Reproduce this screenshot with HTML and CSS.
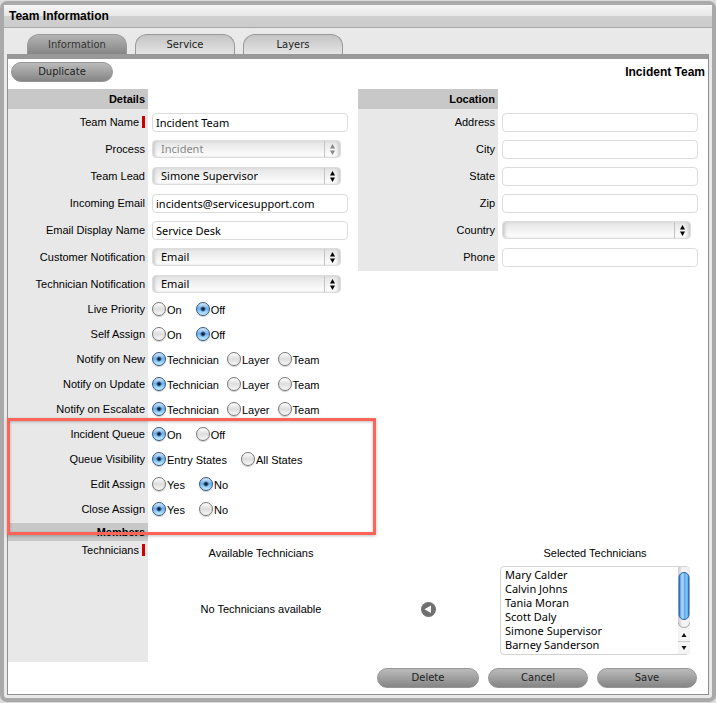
FILE: index.html
```html
<!DOCTYPE html>
<html lang="en">
  <head>
    <meta charset="utf-8" />
    <title>Team Information</title>
    <link rel="stylesheet" href="styles.css" />
  </head>
  <body>
    <svg class="symbols" aria-hidden="true">
      <symbol id="arrows" viewBox="0 0 7 11">
        <path d="M3.5 0 L6 4.5 H1 Z M3.5 11 L6 6.5 H1 Z" fill="currentColor" />
      </symbol>
    </svg>

    <div class="window">
      <h1 class="title">Team Information</h1>

      <div class="tabs" role="tablist">
        <button class="tab active" role="tab" aria-selected="true">Information</button>
        <button class="tab" role="tab">Service</button>
        <button class="tab" role="tab">Layers</button>
      </div>

      <form class="panel">
        <div class="toolbar">
          <button type="button" class="button wide">Duplicate</button>
          <h2 class="team">Incident Team</h2>
        </div>

        <div class="columns">
          <div class="column">
            <h3 class="section">Details</h3>
            <div class="row">
              <label class="label required" for="teamName">Team Name</label>
              <div class="field"><input type="text" id="teamName" value="Incident Team" /></div>
            </div>
            <div class="row">
              <label class="label" for="process">Process</label>
              <div class="field">
                <div class="dropdown disabled">
                  <select id="process" disabled><option>Incident</option></select>
                  <svg class="arrows"><use href="#arrows" /></svg>
                </div>
              </div>
            </div>
            <div class="row">
              <label class="label" for="teamLead">Team Lead</label>
              <div class="field">
                <div class="dropdown">
                  <select id="teamLead"><option>Simone Supervisor</option></select>
                  <svg class="arrows"><use href="#arrows" /></svg>
                </div>
              </div>
            </div>
            <div class="row">
              <label class="label" for="email">Incoming Email</label>
              <div class="field"><input type="text" id="email" value="incidents@servicesupport.com" /></div>
            </div>
            <div class="row">
              <label class="label" for="displayName">Email Display Name</label>
              <div class="field"><input type="text" id="displayName" value="Service Desk" /></div>
            </div>
            <div class="row">
              <label class="label" for="customerNote">Customer Notification</label>
              <div class="field">
                <div class="dropdown">
                  <select id="customerNote"><option>Email</option></select>
                  <svg class="arrows"><use href="#arrows" /></svg>
                </div>
              </div>
            </div>
            <div class="row">
              <label class="label" for="technicianNote">Technician Notification</label>
              <div class="field">
                <div class="dropdown">
                  <select id="technicianNote"><option>Email</option></select>
                  <svg class="arrows"><use href="#arrows" /></svg>
                </div>
              </div>
            </div>

            <div class="row short" role="radiogroup" aria-labelledby="livePriority">
              <span class="label" id="livePriority">Live Priority</span>
              <div class="choices">
                <label><input type="radio" name="live" />On</label>
                <label><input type="radio" name="live" checked />Off</label>
              </div>
            </div>
            <div class="row short" role="radiogroup" aria-labelledby="selfAssign">
              <span class="label" id="selfAssign">Self Assign</span>
              <div class="choices">
                <label><input type="radio" name="self" />On</label>
                <label><input type="radio" name="self" checked />Off</label>
              </div>
            </div>
            <div class="row short" role="radiogroup" aria-labelledby="notifyNew">
              <span class="label" id="notifyNew">Notify on New</span>
              <div class="choices tight">
                <label><input type="radio" name="new" checked />Technician</label>
                <label><input type="radio" name="new" />Layer</label>
                <label><input type="radio" name="new" />Team</label>
              </div>
            </div>
            <div class="row short" role="radiogroup" aria-labelledby="notifyUpdate">
              <span class="label" id="notifyUpdate">Notify on Update</span>
              <div class="choices tight">
                <label><input type="radio" name="update" checked />Technician</label>
                <label><input type="radio" name="update" />Layer</label>
                <label><input type="radio" name="update" />Team</label>
              </div>
            </div>
            <div class="row short" role="radiogroup" aria-labelledby="notifyEscalate">
              <span class="label" id="notifyEscalate">Notify on Escalate</span>
              <div class="choices tight">
                <label><input type="radio" name="escalate" checked />Technician</label>
                <label><input type="radio" name="escalate" />Layer</label>
                <label><input type="radio" name="escalate" />Team</label>
              </div>
            </div>

            <div class="highlight">
              <div class="row short" role="radiogroup" aria-labelledby="queue">
                <span class="label" id="queue">Incident Queue</span>
                <div class="choices">
                  <label><input type="radio" name="queue" checked />On</label>
                  <label><input type="radio" name="queue" />Off</label>
                </div>
              </div>
              <div class="row short" role="radiogroup" aria-labelledby="visibility">
                <span class="label" id="visibility">Queue Visibility</span>
                <div class="choices">
                  <label><input type="radio" name="visibility" checked />Entry States</label>
                  <label><input type="radio" name="visibility" />All States</label>
                </div>
              </div>
              <div class="row short" role="radiogroup" aria-labelledby="editAssign">
                <span class="label" id="editAssign">Edit Assign</span>
                <div class="choices">
                  <label><input type="radio" name="edit" />Yes</label>
                  <label><input type="radio" name="edit" checked />No</label>
                </div>
              </div>
              <div class="row short" role="radiogroup" aria-labelledby="closeAssign">
                <span class="label" id="closeAssign">Close Assign</span>
                <div class="choices">
                  <label><input type="radio" name="close" checked />Yes</label>
                  <label><input type="radio" name="close" />No</label>
                </div>
              </div>
            </div>
          </div>

          <div class="column">
            <h3 class="section">Location</h3>
            <div class="row">
              <label class="label" for="address">Address</label>
              <div class="field"><input type="text" id="address" /></div>
            </div>
            <div class="row">
              <label class="label" for="city">City</label>
              <div class="field"><input type="text" id="city" /></div>
            </div>
            <div class="row">
              <label class="label" for="state">State</label>
              <div class="field"><input type="text" id="state" /></div>
            </div>
            <div class="row">
              <label class="label" for="zip">Zip</label>
              <div class="field"><input type="text" id="zip" /></div>
            </div>
            <div class="row">
              <label class="label" for="country">Country</label>
              <div class="field">
                <div class="dropdown">
                  <select id="country"><option></option></select>
                  <svg class="arrows"><use href="#arrows" /></svg>
                </div>
              </div>
            </div>
            <div class="row">
              <label class="label" for="phone">Phone</label>
              <div class="field"><input type="text" id="phone" /></div>
            </div>
          </div>
        </div>

        <h3 class="section members">Members</h3>
        <div class="row technicians">
          <span class="label required">Technicians</span>
          <div class="transfer">
            <div class="side">
              <span>Available Technicians</span>
              <p class="empty">No Technicians available</p>
            </div>
            <button type="button" class="move" aria-label="Remove technician">
              <svg width="15" height="15" viewBox="0 0 15 15">
                <circle cx="7.5" cy="7.5" r="7.5" fill="#707070" />
                <path d="M10 3.5 V11 L3.5 7.3 Z" fill="#fff" />
              </svg>
            </button>
            <div class="side">
              <label for="selected">Selected Technicians</label>
              <div class="listbox">
                <select id="selected" multiple size="6">
                  <option>Mary Calder</option>
                  <option>Calvin Johns</option>
                  <option>Tania Moran</option>
                  <option>Scott Daly</option>
                  <option>Simone Supervisor</option>
                  <option>Barney Sanderson</option>
                </select>
                <svg class="scrollbar" width="12" height="87" viewBox="0 0 12 87">
                  <defs>
                    <linearGradient id="track">
                      <stop offset="0" stop-color="#ccc" />
                      <stop offset="0.4" stop-color="#f5f5f5" />
                      <stop offset="1" stop-color="#eee" />
                    </linearGradient>
                    <linearGradient id="thumb">
                      <stop offset="0" stop-color="#2468b8" />
                      <stop offset="0.2" stop-color="#8cc0f4" />
                      <stop offset="0.4" stop-color="#b5dafa" />
                      <stop offset="0.55" stop-color="#62aaf0" />
                      <stop offset="0.8" stop-color="#84cdfa" />
                      <stop offset="1" stop-color="#2468b8" />
                    </linearGradient>
                  </defs>
                  <rect width="12" height="87" fill="url(#track)" />
                  <rect x="1" y="5.5" width="10" height="47" rx="5" fill="url(#thumb)" stroke="#2662a8" />
                  <path d="M0 55 Q1 60.5 6 60.5 T12 55 V87 H0 Z" fill="#f4f4f4" />
                  <path d="M0 55 Q1 60.5 6 60.5 Q11 60.5 12 55" fill="none" stroke="#aaa" />
                  <path d="M0 74.5 H12" stroke="#ccc" />
                  <path d="M6 66 L8.5 70 H3.5 Z M6 83 L8.5 79 H3.5 Z" fill="#111" />
                </svg>
              </div>
            </div>
          </div>
        </div>

        <div class="footer">
          <button type="button" class="button wide">Delete</button>
          <button type="button" class="button">Cancel</button>
          <button type="submit" class="button">Save</button>
        </div>
      </form>
    </div>
  </body>
</html>
```
FILE: styles.css
```css
* {
  box-sizing: border-box;
}

body {
  margin: 0;
  padding: 1px 0 2px;
  background: #dcdcdc;
  color: #000;
  font: 11px/14px 'Liberation Sans', Arial, sans-serif;
}

h1,
h2,
h3,
p {
  margin: 0;
}

.symbols {
  display: none;
}

.window {
  border: 4px solid #a9a9a9;
  border-radius: 7px;
  background: #e9e9e9;
  padding-bottom: 3px;
}

.title {
  height: 23px;
  padding-left: 5px;
  border-bottom: 1px solid #a8a8a8;
  background: linear-gradient(#f6f6f6, #e6e6e6 50%, #d0d0d0 52%, #cbcbcb);
  font-size: 12px;
  line-height: 22px;
}

/* tabs */
.tabs {
  display: flex;
  gap: 8px;
  padding: 6px 23px 0;
}

.tab {
  width: 100px;
  height: 20px;
  padding: 0;
  border: 1px solid #999;
  border-bottom: none;
  border-radius: 12px 12px 0 0;
  background: linear-gradient(#c4c4c4, #e4e4e4);
  color: #222;
  font: 10px/18px 'DejaVu Sans', Verdana, sans-serif;
}

.tab.active {
  background: linear-gradient(#b4b4b4, #868686);
  color: #333;
}

.panel {
  margin: 0 3px;
  border: 1px solid #8e8e8e;
  border-top: 5px solid #999;
  background: #fff;
}

.toolbar {
  display: flex;
  justify-content: space-between;
  padding: 3px 3px 7px;
}

.team {
  font-size: 12px;
  line-height: 20px;
}

.button {
  width: 100px;
  height: 20px;
  padding: 0;
  border: 1px solid #969696;
  border-radius: 10px;
  background: linear-gradient(#bbb, #858585);
  color: #222;
  font: 10px/18px 'DejaVu Sans', Verdana, sans-serif;
}

.button.wide {
  width: 102px;
}

/* form rows */
.columns {
  display: grid;
  grid-template-columns: 1fr 1fr;
}

.section {
  width: 140px;
  height: 20px;
  padding-right: 3px;
  background: #c8c8c8;
  font-size: 11px;
  line-height: 20px;
  text-align: right;
}

.section.members {
  height: 18px;
  line-height: 18px;
}

.row {
  display: flex;
  min-height: 27px;
}

.row.short {
  min-height: 25px;
}

.label {
  flex: none;
  width: 140px;
  padding: 6px 3px 0 0;
  background: #e8e8e8;
  text-align: right;
}

.row.short .label {
  padding-top: 4px;
}

.row.technicians .label {
  padding-top: 2px;
}

.label.required::after {
  content: '';
  display: inline-block;
  width: 3px;
  height: 12px;
  margin-left: 3px;
  background: #c00;
  vertical-align: -2px;
}

.field {
  flex: 1;
  padding: 4px 10px 0 4px;
}

input[type='text'],
select {
  display: block;
  width: 100%;
  margin: 0;
  color: #000;
  font: 11px/14px 'Lucida Grande', 'Noto Sans', sans-serif;
}

input[type='text'] {
  height: 19px;
  padding: 0 3px 1px;
  border: 1px solid #dcdcdc;
  border-radius: 4px;
  background: #fff;
}

.dropdown {
  position: relative;
  margin-right: 7px;
}

.dropdown select {
  appearance: none;
  height: 18px;
  padding: 0 20px 0 8px;
  border: 1px solid #ddd;
  border-radius: 4px;
  background: linear-gradient(#e4e4e4, #fff);
  box-shadow: inset 3px 0 3px -1px #ccc, inset -3px 0 3px -1px #ccc;
}

.dropdown.disabled select {
  color: #888;
  opacity: 1;
}

.arrows {
  position: absolute;
  top: 1px;
  right: 1px;
  width: 16px;
  height: 16px;
  padding: 3px 4px 2px;
  border-left: 1px solid #c4c4c4;
  pointer-events: none;
}

.disabled .arrows {
  color: #888;
}

/* radios */
.choices {
  display: flex;
  gap: 14px;
  padding: 4px 0 0 4px;
}

.choices.tight {
  gap: 8px;
}

.choices label {
  display: flex;
  gap: 1px;
  line-height: 16px;
}

input[type='radio'] {
  appearance: none;
  width: 14px;
  height: 14px;
  margin: 0;
  border: 1px solid #777;
  border-radius: 50%;
  background: linear-gradient(#fff, #ddd 50%, #f8f8f8);
  box-shadow: 0 1px 1px #ccc;
}

input[type='radio']:checked {
  border-color: #35557f;
  background: radial-gradient(circle, #0b2342 0 1px, transparent 3px),
    linear-gradient(#dcecfc, #6faeea 45%, #7fc0f5 60%, #c8f0ff);
}

/* red frame around the queue settings */
.highlight {
  position: relative;
}

.highlight::after {
  content: '';
  position: absolute;
  top: -5px;
  right: -18px;
  bottom: -12px;
  left: -1px;
  border: 3px solid #fc6458;
  box-shadow: 0 1px 3px rgba(0, 0, 0, 0.25), inset 0 1px 3px rgba(0, 0, 0, 0.25);
  pointer-events: none;
}

/* members */
.transfer {
  flex: 1;
  display: grid;
  grid-template-columns: 1fr 108px 1fr;
  padding: 5px 0 7px;
}

.side {
  display: flex;
  flex-direction: column;
  align-items: center;
  gap: 6px;
}

.empty {
  padding-top: 36px;
}

.move {
  align-self: center;
  justify-self: center;
  width: 15px;
  height: 15px;
  margin-top: 18px;
  padding: 0;
  border: none;
  background: none;
}

.move svg {
  display: block;
}

.listbox {
  position: relative;
  width: 190px;
}

.listbox select {
  height: 89px;
  padding: 0;
  border: 1px solid #d4d4d4;
  border-radius: 4px;
  background: #fff;
  overflow: hidden;
  scrollbar-width: none;
}

.listbox option {
  height: 14px;
  min-height: 14px;
  padding: 0 4px;
  line-height: 14px;
}

.scrollbar {
  position: absolute;
  top: 1px;
  right: 0;
}

.footer {
  display: flex;
  justify-content: flex-end;
  gap: 9px;
  padding: 6px 11px;
}
```
